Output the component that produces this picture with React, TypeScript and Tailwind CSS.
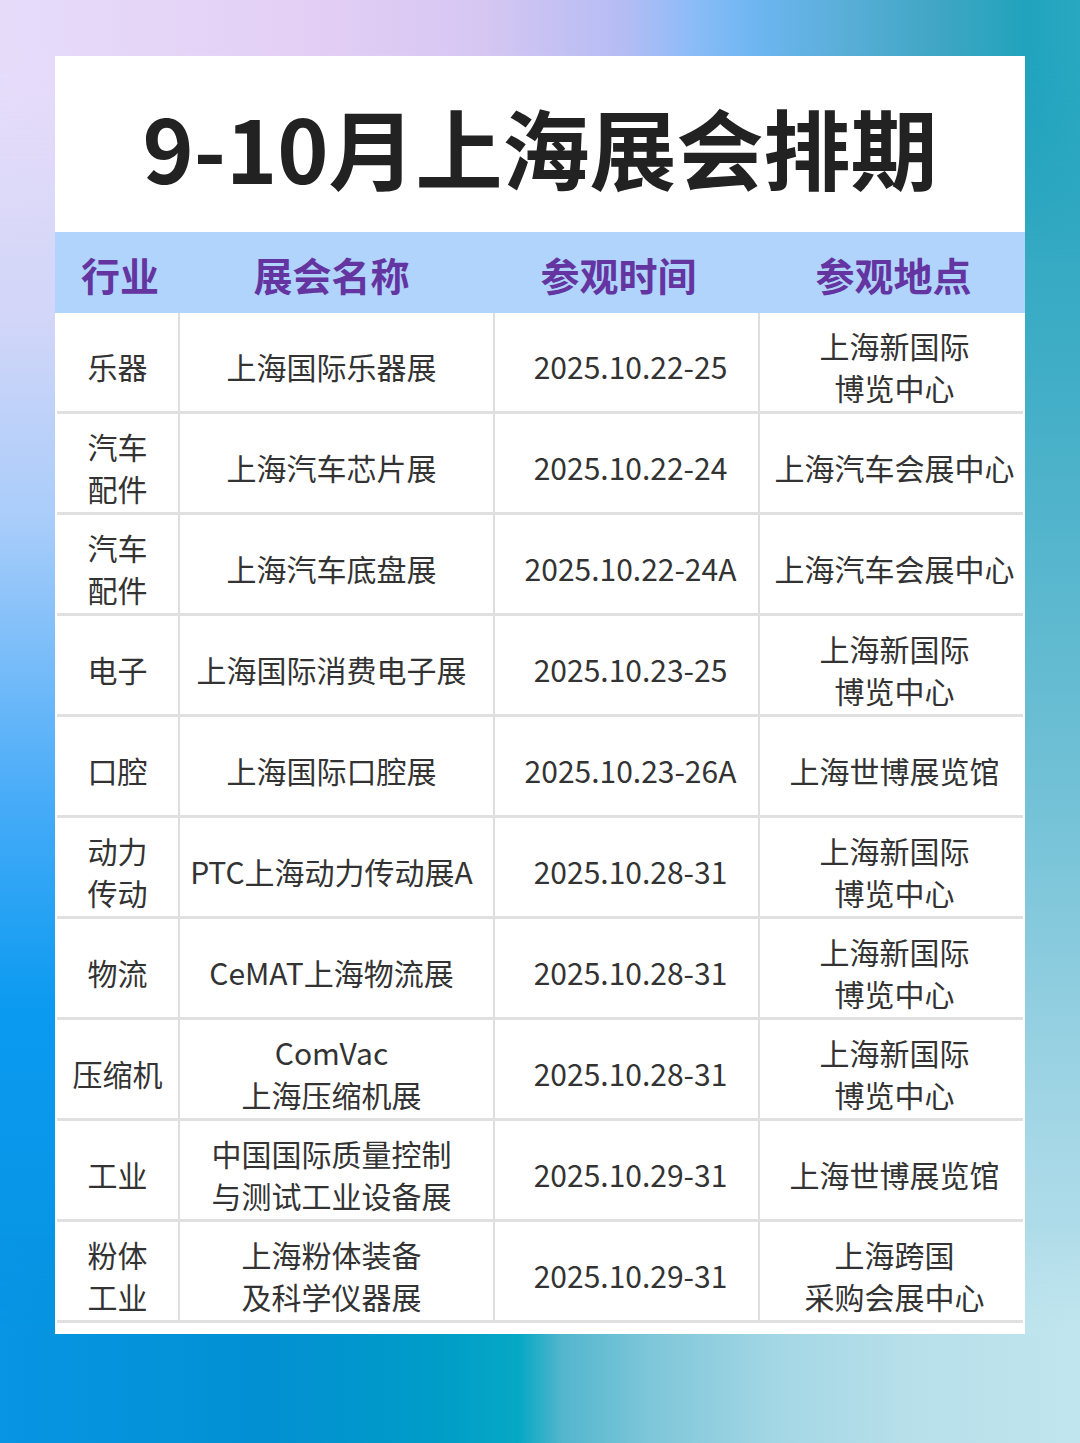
import React from "react";

type Row = { a: string[]; b: string[]; c: string; d: string[] };

const rows: Row[] = [
  { a: ["乐器"], b: ["上海国际乐器展"], c: "2025.10.22-25", d: ["上海新国际", "博览中心"] },
  { a: ["汽车", "配件"], b: ["上海汽车芯片展"], c: "2025.10.22-24", d: ["上海汽车会展中心"] },
  { a: ["汽车", "配件"], b: ["上海汽车底盘展"], c: "2025.10.22-24A", d: ["上海汽车会展中心"] },
  { a: ["电子"], b: ["上海国际消费电子展"], c: "2025.10.23-25", d: ["上海新国际", "博览中心"] },
  { a: ["口腔"], b: ["上海国际口腔展"], c: "2025.10.23-26A", d: ["上海世博展览馆"] },
  { a: ["动力", "传动"], b: ["PTC上海动力传动展A"], c: "2025.10.28-31", d: ["上海新国际", "博览中心"] },
  { a: ["物流"], b: ["CeMAT上海物流展"], c: "2025.10.28-31", d: ["上海新国际", "博览中心"] },
  { a: ["压缩机"], b: ["ComVac", "上海压缩机展"], c: "2025.10.28-31", d: ["上海新国际", "博览中心"] },
  { a: ["工业"], b: ["中国国际质量控制", "与测试工业设备展"], c: "2025.10.29-31", d: ["上海世博展览馆"] },
  { a: ["粉体", "工业"], b: ["上海粉体装备", "及科学仪器展"], c: "2025.10.29-31", d: ["上海跨国", "采购会展中心"] },
];

function Cell({ lines, cls }: { lines: string[]; cls: string }) {
  return (
    <div className={"flex flex-col items-center justify-center pt-[8px] text-center " + cls}>
      {lines.map((l, i) => (
        <div key={i} className="whitespace-nowrap">
          {l}
        </div>
      ))}
    </div>
  );
}

export default function App() {
  return (
    <div
      className="relative h-[1443px] w-[1080px] overflow-hidden bg-[linear-gradient(to_bottom,#e4dcfa_0%,#d2d6f8_22%,#a9cdfa_36%,#45abf8_56%,#0a9af0_70%,#0591dd_100%)]"
      style={{ fontFamily: '"Noto Sans CJK SC", "Noto Sans", sans-serif' }}
    >
      <div className="pointer-events-none absolute inset-0 bg-[linear-gradient(to_bottom,#1fa2bd_0%,#3fadc6_25%,#72c1d6_55%,#a7d8e7_80%,#c2e5ee_100%)] [mask-image:linear-gradient(to_right,transparent_48%,black_72%)]" />
      <div className="pointer-events-none absolute inset-x-0 top-0 h-[260px] bg-[linear-gradient(to_right,#e6dcfa_0%,#e4cff5_28%,#d5c6f2_45%,#b4bcf4_58%,#8cbcf7_64%,#6db6f2_70%,#5aaed8_78%,#3fa6c4_87%,#21a3bd_95%,#2aa8c2_100%)] [mask-image:linear-gradient(to_bottom,black_0%,black_20%,transparent_100%)]" />
      <div className="pointer-events-none absolute inset-x-0 bottom-0 h-[220px] bg-[linear-gradient(to_right,#0795e4_0%,#0290d2_25%,#009cc8_40%,#05a8c4_48%,#52b6cd_52%,#7dc6d9_60%,#a4d7e5_72%,#b8e0ea_85%,#c0e5ee_100%)] [mask-image:linear-gradient(to_top,black_0%,black_50%,transparent_100%)]" />

      <div className="relative px-[55px] pt-[56px]">
        <div className="flex h-[1278px] w-[970px] flex-col bg-white">
          <div className="flex h-[176px] items-center justify-center pt-[4px] text-[87px] font-bold leading-none text-[#222222]">
            9-10月上海展会排期
          </div>
          <div className="grid h-[81px] grid-cols-[125px_315px_265px_265px] items-center bg-[#b0d4fc] pt-[4px] text-[39px] font-bold leading-none text-[#6434a0]">
            <div className="pl-[5px] text-center">行业</div>
            <div className="pr-[12px] text-center">展会名称</div>
            <div className="pr-[18px] text-center">参观时间</div>
            <div className="pl-[2px] text-center">参观地点</div>
          </div>
          <div className="flex flex-col px-[2px] text-[30px] leading-[42px] text-[#333333]">
            {rows.map((r, i) => (
              <div
                key={i}
                className="grid h-[101px] grid-cols-[123px_315px_265px_263px] border-b-[3px] border-[#e0e0e0]"
              >
                <Cell lines={r.a} cls="border-r-2 border-[#dedede]" />
                <Cell lines={r.b} cls="border-r-2 border-[#dedede] pr-[10px]" />
                <Cell lines={[r.c]} cls="border-r-2 border-[#dedede] pl-[8px]" />
                <Cell lines={r.d} cls="pl-[6px]" />
              </div>
            ))}
          </div>
        </div>
      </div>
    </div>
  );
}
